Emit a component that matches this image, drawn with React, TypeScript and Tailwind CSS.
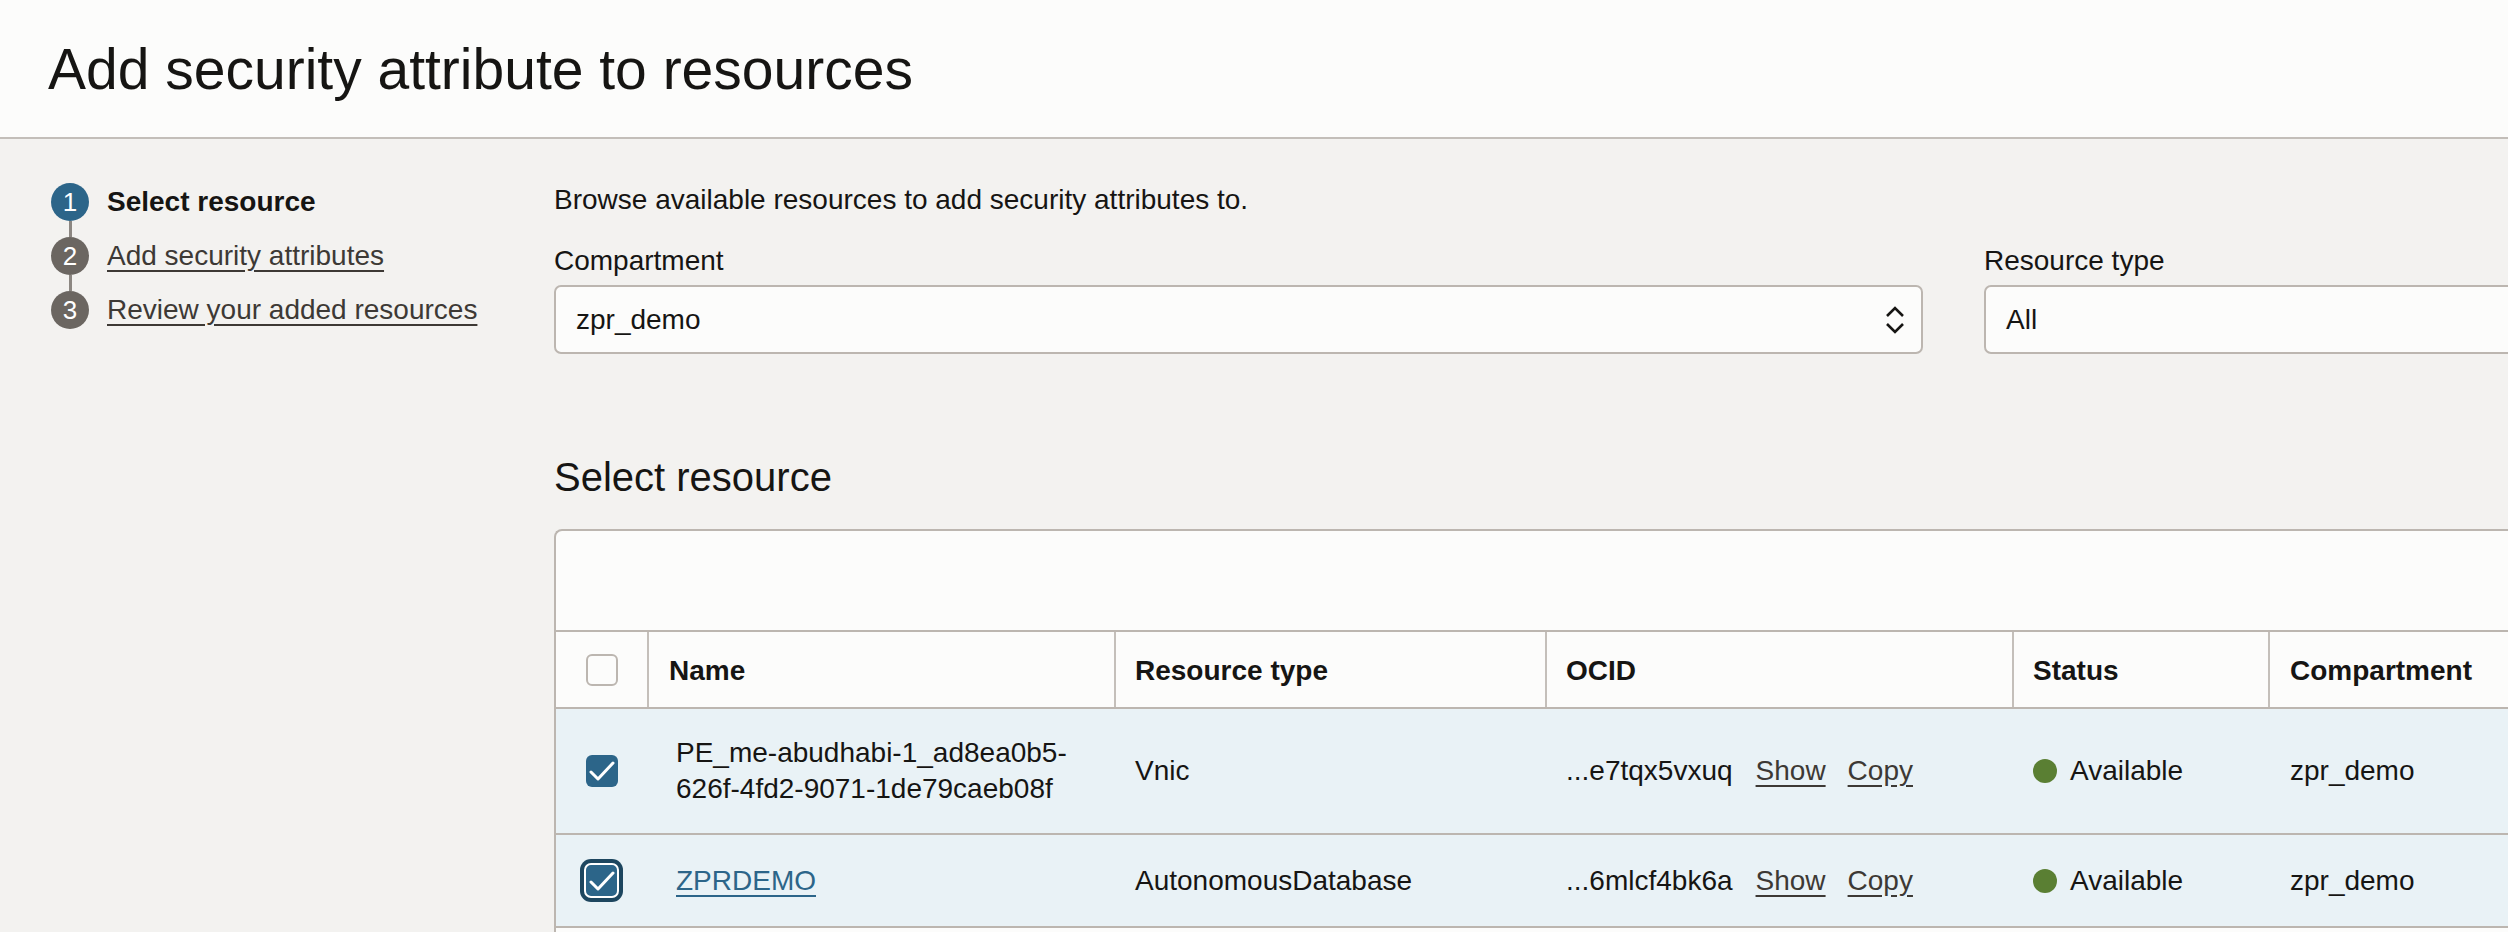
import React from 'react';

const steps = [
  { n: 1, label: 'Select resource', active: true },
  { n: 2, label: 'Add security attributes', active: false },
  { n: 3, label: 'Review your added resources', active: false },
];

const cols = 'grid grid-cols-[91px_467px_431px_467px_256px_420px]';

function Check() {
  return (
    <svg width="26" height="22" viewBox="0 0 26 22" fill="none">
      <path d="M2 12 L9 19 L24 3" stroke="white" strokeWidth="3" strokeLinecap="round" strokeLinejoin="round" />
    </svg>
  );
}

function Checkbox({ checked, focused }: { checked?: boolean; focused?: boolean }) {
  if (!checked) {
    return <div className="h-[32px] w-[32px] rounded-[6px] border-2 border-[#bcb6b0] bg-[#fcfcfb]" />;
  }
  if (focused) {
    return (
      <div className="rounded-[11px] bg-[#1d465f] p-[4px]">
        <div className="flex h-[35px] w-[35px] items-center justify-center rounded-[7px] border-2 border-white bg-[#2c6589]">
          <Check />
        </div>
      </div>
    );
  }
  return (
    <div className="flex h-[32px] w-[32px] items-center justify-center rounded-[6px] bg-[#2c6589]">
      <Check />
    </div>
  );
}

function Status() {
  return (
    <div className="flex items-center gap-[13px]">
      <span className="h-[24px] w-[24px] rounded-full bg-[#5a7f33]" />
      <span>Available</span>
    </div>
  );
}

function Ocid({ tail }: { tail: string }) {
  return (
    <div className="flex items-center">
      <span>...{tail}</span>
      <a className="ml-[23px] text-[#3d3935] underline underline-offset-[5px]">Show</a>
      <a className="ml-[22px] text-[#3d3935] underline underline-offset-[5px]">Copy</a>
    </div>
  );
}

export default function App() {
  return (
    <div className="h-[932px] w-[2508px] overflow-hidden bg-[#f3f2f0] font-['Liberation_Sans',Arial,sans-serif] text-[28px] leading-[36px] text-[#161513]">
      <header className="flex h-[139px] items-center border-b-2 border-[#c3beb9] bg-[#fcfcfb] pl-[48px]">
        <h1 className="text-[57px] leading-[64px] font-normal">Add security attribute to resources</h1>
      </header>

      <div className="flex">
        <nav className="w-[554px] shrink-0 pl-[51px] pt-[44px]">
          <ol className="flex flex-col">
            {steps.map((s, i) => (
              <li key={s.n} className="flex gap-[18px]">
                <div className="flex flex-col items-center">
                  <span
                    className={
                      'flex h-[38px] w-[38px] items-center justify-center rounded-full text-[26px] leading-none text-white ' +
                      (s.active ? 'bg-[#2c6589]' : 'bg-[#6b6661]')
                    }
                  >
                    {s.n}
                  </span>
                  {i < steps.length - 1 && <span className="h-[16px] w-[3px] bg-[#8c8782]" />}
                </div>
                {s.active ? (
                  <span className="font-bold leading-[38px]">{s.label}</span>
                ) : (
                  <a className="leading-[38px] text-[#3d3935] underline underline-offset-[5px]">{s.label}</a>
                )}
              </li>
            ))}
          </ol>
        </nav>

        <main className="min-w-0 flex-1 pt-[43px]">
          <p>Browse available resources to add security attributes to.</p>

          <div className="mt-[25px] flex gap-[61px]">
            <div className="w-[1369px] shrink-0">
              <label className="block">Compartment</label>
              <div className="mt-[6px] flex h-[69px] items-center justify-between rounded-[7px] border-2 border-[#bcb6b0] bg-[#fcfcfb] pl-[20px] pr-[15px]">
                <span>zpr_demo</span>
                <svg width="22" height="32" viewBox="0 0 22 32" fill="none">
                  <path d="M3 12 L11 4 L19 12" stroke="#161513" strokeWidth="2.6" />
                  <path d="M3 20 L11 28 L19 20" stroke="#161513" strokeWidth="2.6" />
                </svg>
              </div>
            </div>
            <div className="w-[900px] shrink-0">
              <label className="block">Resource type</label>
              <div className="mt-[6px] flex h-[69px] items-center rounded-[7px] border-2 border-[#bcb6b0] bg-[#fcfcfb] pl-[20px]">
                <span>All</span>
              </div>
            </div>
          </div>

          <h2 className="mt-[99px] text-[40px] leading-[48px] font-normal">Select resource</h2>

          <div className="mt-[28px] w-[2140px] rounded-tl-[8px] border-l-2 border-t-2 border-[#bcb6b0] bg-[#fcfcfb]">
            <div className="h-[101px] border-b-2 border-[#bcb6b0]" />

            <div className={cols + ' h-[77px] border-b-2 border-[#bcb6b0] font-bold'}>
              <div className="flex items-center justify-center">
                <Checkbox />
              </div>
              <div className="flex items-center border-l-2 border-[#c4bfba] pl-[20px] pt-[2px]">Name</div>
              <div className="flex items-center border-l-2 border-[#c4bfba] pl-[19px] pt-[2px]">Resource type</div>
              <div className="flex items-center border-l-2 border-[#c4bfba] pl-[19px] pt-[2px]">OCID</div>
              <div className="flex items-center border-l-2 border-[#c4bfba] pl-[19px] pt-[2px]">Status</div>
              <div className="flex items-center border-l-2 border-[#c4bfba] pl-[20px] pt-[2px]">Compartment</div>
            </div>

            <div className={cols + ' h-[126px] border-b-2 border-[#bcb6b0] bg-[#e9f2f6]'}>
              <div className="flex items-center justify-center">
                <Checkbox checked />
              </div>
              <div className="flex flex-col justify-center pl-[29px]">
                <span>PE_me-abudhabi-1_ad8ea0b5-</span>
                <span>626f-4fd2-9071-1de79caeb08f</span>
              </div>
              <div className="flex items-center pl-[21px]">Vnic</div>
              <div className="flex items-center pl-[21px]">
                <Ocid tail="e7tqx5vxuq" />
              </div>
              <div className="flex items-center pl-[21px]">
                <Status />
              </div>
              <div className="flex items-center pl-[22px]">zpr_demo</div>
            </div>

            <div className={cols + ' h-[93px] border-b-2 border-[#bcb6b0] bg-[#e9f2f6]'}>
              <div className="flex items-center justify-center">
                <Checkbox checked focused />
              </div>
              <div className="flex items-center pl-[29px]">
                <a className="text-[#2c6589] underline underline-offset-[5px]">ZPRDEMO</a>
              </div>
              <div className="flex items-center pl-[21px]">AutonomousDatabase</div>
              <div className="flex items-center pl-[21px]">
                <Ocid tail="6mlcf4bk6a" />
              </div>
              <div className="flex items-center pl-[21px]">
                <Status />
              </div>
              <div className="flex items-center pl-[22px]">zpr_demo</div>
            </div>

            <div className="h-[80px]" />
          </div>
        </main>
      </div>
    </div>
  );
}
